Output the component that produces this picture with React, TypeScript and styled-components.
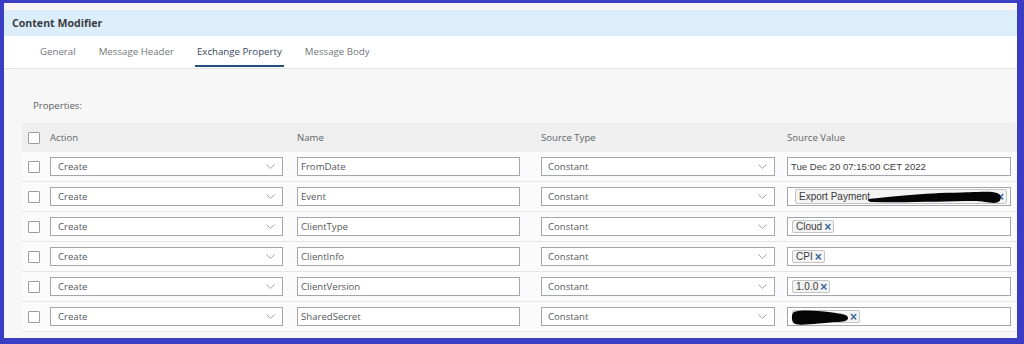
import React from "react";
import styled, { createGlobalStyle } from "styled-components";

const GlobalStyle = createGlobalStyle`
  html, body {
    margin: 0;
    padding: 0;
    background: #ffffff;
  }
  * {
    box-sizing: border-box;
  }
`;

const Frame = styled.div`
  width: 1024px;
  height: 344px;
  border-style: solid;
  border-color: #3b3ec4;
  border-width: 3px 7px 6px 4px;
  background: #f7f7f7;
  display: flex;
  flex-direction: column;
  font-family: "Open Sans", "Noto Sans", sans-serif;
  overflow: hidden;
`;

const TopStrip = styled.div`
  height: 7px;
  background: #f8f4f6;
`;

const TitleBar = styled.div`
  height: 26px;
  background: #dcedfb;
  display: flex;
  align-items: center;
  padding-left: 8px;
  font-size: 10.6px;
  font-weight: 700;
  color: #3a3e42;
`;

const TabBar = styled.div`
  height: 33px;
  background: #ffffff;
  border-bottom: 1px solid #e4e4e4;
  display: flex;
  align-items: stretch;
  gap: 19px;
  padding-left: 34px;
`;

const Tab = styled.div<{ active?: boolean }>`
  display: flex;
  align-items: center;
  padding: 0 2px;
  font-size: 9.7px;
  color: ${(p) => (p.active ? "#34475c" : "#74777a")};
  border-bottom: 2px solid ${(p) => (p.active ? "#24507c" : "transparent")};
  margin-bottom: 1px;
  padding-top: 2px;
`;

const Body = styled.div`
  flex: 1;
  padding: 30px 0 0 18px;
  background: #f7f7f7;
`;

const SectionLabel = styled.div`
  height: 14px;
  line-height: 14px;
  font-size: 9.6px;
  color: #5c6064;
  padding-left: 11px;
  margin-bottom: 10px;
`;

const Table = styled.div`
  display: flex;
  flex-direction: column;
`;

const cols = "28px 247px 244px 246px 1fr";

const HeaderRow = styled.div`
  display: grid;
  grid-template-columns: ${cols};
  align-items: center;
  height: 29px;
  background: #efefef;
  font-size: 9.6px;
  color: #63676b;
`;

const Row = styled.div`
  display: grid;
  grid-template-columns: ${cols};
  align-items: center;
  height: 30px;
  background: #fbfbfb;
  border-bottom: 1px solid #e6e6e6;
`;

const Cell = styled.div`
  position: relative;
  display: flex;
  align-items: center;
`;

const CheckBox = styled.div`
  width: 12px;
  height: 12px;
  margin-left: 6px;
  border: 1px solid #9a9ea2;
  background: #ffffff;
  border-radius: 1px;
`;

const Field = styled.div<{ w: number }>`
  width: ${(p) => p.w}px;
  height: 19px;
  border: 1px solid #a3a7ab;
  background: #ffffff;
  display: flex;
  align-items: center;
  font-size: 9.6px;
  color: #55595d;
  position: relative;
`;

const FieldText = styled.span<{ pad: number }>`
  padding-left: ${(p) => p.pad}px;
  flex: 1;
  white-space: nowrap;
  overflow: hidden;
`;

const ValueText = styled.span`
  padding-left: 3px;
  font-family: "Liberation Sans", Arial, sans-serif;
  font-size: 9.6px;
  color: #404040;
`;

const Chevron = styled.svg`
  width: 9px;
  height: 5px;
  margin-right: 7px;
  flex: none;
`;

const Token = styled.span<{ grow?: boolean }>`
  display: inline-flex;
  align-items: center;
  gap: 2px;
  height: 13px;
  margin-left: 4px;
  padding: 0 2px 0 3px;
  border: 1px solid #c4c4c4;
  background: #f4f4f4;
  border-radius: 2px;
  font-family: "Liberation Sans", Arial, sans-serif;
  font-size: 10px;
  color: #3a3a3a;
  white-space: nowrap;
  ${(p) => p.grow && "flex: 1; min-width: 0; margin-left: 7px; margin-right: 3px; height: 15px;"}
`;

const TokenFill = styled.span<{ w?: number }>`
  ${(p) => (p.w ? `width: ${p.w}px; flex: none;` : "flex: 1;")}
`;

const TokenClose = styled.span`
  flex: none;
  color: #3a6699;
  font-weight: 700;
  font-size: 12px;
  line-height: 10px;
`;

const Redaction = styled.svg<{ left: number; top: number }>`
  position: absolute;
  left: ${(p) => p.left}px;
  top: ${(p) => p.top}px;
`;

const ChevronIcon = () => (
  <Chevron viewBox="0 0 9 5">
    <polyline points="0.4,0.5 4.5,4.4 8.6,0.5" fill="none" stroke="#9a9ea2" strokeWidth="0.9" />
  </Chevron>
);

type Item = { name: string; value: React.ReactNode };

const rows: Item[] = [
  { name: "FromDate", value: <ValueText>Tue Dec 20 07:15:00 CET 2022</ValueText> },
  {
    name: "Event",
    value: (
      <>
        <Token grow>
          <span>Export Payment</span>
          <TokenFill />
          <TokenClose>×</TokenClose>
        </Token>
        <Redaction left={79} top={0} width="136" height="18" viewBox="0 0 136 18">
          <path
            d="M2 11 C 20 9, 55 5, 95 4.5 C 115 4, 124 3, 130 5 C 135 7, 135 13, 130 14.5 C 124 16, 118 13, 106 13 C 80 13, 40 15, 6 14 C 1 14, 0 12, 2 11 Z"
            fill="#050505"
          />
        </Redaction>
      </>
    ),
  },
  { name: "ClientType", value: <Token>Cloud <TokenClose>×</TokenClose></Token> },
  { name: "ClientInfo", value: <Token>CPI <TokenClose>×</TokenClose></Token> },
  { name: "ClientVersion", value: <Token>1.0.0 <TokenClose>×</TokenClose></Token> },
  {
    name: "SharedSecret",
    value: (
      <>
        <Token>
          <TokenFill w={52} />
          <TokenClose>×</TokenClose>
        </Token>
        <Redaction left={3} top={1} width="58" height="17" viewBox="0 0 58 17">
          <path
            d="M3 3 C 12 0, 30 2, 45 4 C 52 5, 57 6, 57 9 C 57 12, 52 13, 45 13 C 30 14, 12 17, 4 15 C 0 13, 0 5, 3 3 Z"
            fill="#050505"
          />
        </Redaction>
      </>
    ),
  },
];

const App = () => {
  return (
    <>
      <GlobalStyle />
      <Frame>
        <TopStrip />
        <TitleBar>Content Modifier</TitleBar>
        <TabBar>
          <Tab>General</Tab>
          <Tab>Message Header</Tab>
          <Tab active>Exchange Property</Tab>
          <Tab>Message Body</Tab>
        </TabBar>
        <Body>
          <SectionLabel>Properties:</SectionLabel>
          <Table>
            <HeaderRow>
              <Cell>
                <CheckBox />
              </Cell>
              <Cell>Action</Cell>
              <Cell>Name</Cell>
              <Cell>Source Type</Cell>
              <Cell>Source Value</Cell>
            </HeaderRow>
            {rows.map((r) => (
              <Row key={r.name}>
                <Cell>
                  <CheckBox />
                </Cell>
                <Cell>
                  <Field w={233}>
                    <FieldText pad={7}>Create</FieldText>
                    <ChevronIcon />
                  </Field>
                </Cell>
                <Cell>
                  <Field w={223}>
                    <FieldText pad={3}>{r.name}</FieldText>
                  </Field>
                </Cell>
                <Cell>
                  <Field w={234}>
                    <FieldText pad={6}>Constant</FieldText>
                    <ChevronIcon />
                  </Field>
                </Cell>
                <Cell>
                  <Field w={224}>{r.value}</Field>
                </Cell>
              </Row>
            ))}
          </Table>
        </Body>
      </Frame>
    </>
  );
};

export default App;
